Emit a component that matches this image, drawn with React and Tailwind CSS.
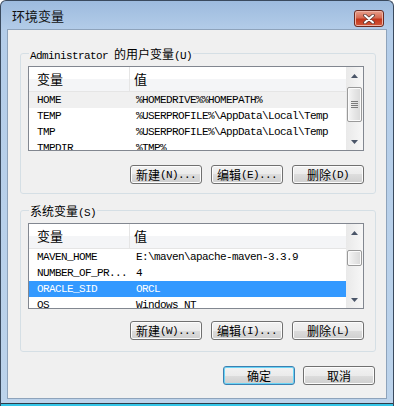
import React from 'react';

const mono = "font-['Liberation_Mono',monospace] text-[11px] tracking-[-0.6px]";
const cjk = "font-['Noto_Sans_CJK_SC',sans-serif] text-[12px]";

const userVars = [
  ['HOME', '%HOMEDRIVE%%HOMEPATH%'],
  ['TEMP', '%USERPROFILE%\\AppData\\Local\\Temp'],
  ['TMP', '%USERPROFILE%\\AppData\\Local\\Temp'],
  ['TMPDIR', '%TMP%'],
];

const sysVars = [
  ['MAVEN_HOME', 'E:\\maven\\apache-maven-3.3.9'],
  ['NUMBER_OF_PR...', '4'],
  ['ORACLE_SID', 'ORCL'],
  ['OS', 'Windows_NT'],
];

const Arrow = ({ down }) => (
  <svg width="7" height="4" viewBox="0 0 7 4">
    <path d={down ? 'M0 0h7L3.5 4z' : 'M0 4h7L3.5 0z'} fill="#4a5568" />
  </svg>
);

const Scrollbar = ({ thumbTop, thumbHeight }) => (
  <div className="w-[17px] flex flex-col bg-[linear-gradient(to_right,#e9e9e9,#f7f7f7)]">
    <div className="h-[17px] flex items-center justify-center">
      <Arrow />
    </div>
    <div className="flex-1 px-[1px]">
      <div
        className="border border-[#9a9a9a] rounded-[2px] bg-[linear-gradient(to_right,#f6f6f6,#e6e6e6_50%,#d9d9d9)] shadow-[inset_0_0_0_1px_#fbfbfb] flex flex-col items-center justify-center gap-[1px]"
        style={{ marginTop: thumbTop, height: thumbHeight }}
      >
        {thumbHeight > 20 && [0, 1, 2, 3].map((i) => (
          <div key={i} className="w-[7px] h-[1px] bg-[#7c7c7c]" />
        ))}
      </div>
    </div>
    <div className="h-[17px] flex items-center justify-center">
      <Arrow down />
    </div>
  </div>
);

const VarList = ({ rows, selected, faded, height, thumbTop, thumbHeight }) => (
  <div className="w-[336px] border border-[#828790] bg-white flex overflow-hidden" style={{ height }}>
    <div className="flex-1 flex flex-col overflow-hidden">
      <div className="h-[25px] flex border-b border-[#e5e5e5] bg-[linear-gradient(to_bottom,#ffffff_50%,#f4f5f7_50%)] shrink-0">
        <div className={`w-[101px] pl-[8px] flex items-center border-r border-[#e5e5e5] ${cjk} text-[13px]`}>变量</div>
        <div className={`flex-1 pl-[4px] flex items-center ${cjk} text-[13px]`}>值</div>
      </div>
      {rows.map(([name, value], i) => (
        <div
          key={name}
          className={`h-[16px] shrink-0 flex items-center whitespace-nowrap ${mono} ${
            i === selected ? 'bg-[#3399ff] text-white' : i === faded ? 'bg-[#f0f0f0] text-black' : 'text-black'
          }`}
        >
          <div className="w-[101px] pl-[8px]">{name}</div>
          <div className="pl-[6px]">{value}</div>
        </div>
      ))}
    </div>
    <Scrollbar thumbTop={thumbTop} thumbHeight={thumbHeight} />
  </div>
);

const Btn = ({ main, hint, def }) => (
  <button
    className={`w-[72px] h-[19px] rounded-[3px] border flex items-center justify-center text-black bg-[linear-gradient(to_bottom,#f2f2f2,#ebebeb_50%,#dddddd_50%,#cfcfcf)] ${
      def ? 'border-[#3c7fb1] shadow-[inset_0_0_0_1px_#6ad4f5]' : 'border-[#707070] shadow-[inset_0_0_0_1px_#fcfcfc]'
    }`}
  >
    <span className={`${cjk} leading-[14px]`}>{main}</span>
    {hint && <span className={`${mono} leading-[14px]`}>{hint}</span>}
  </button>
);

const Group = ({ legend, children, className }) => (
  <fieldset className={`ml-[12px] w-[356px] border border-[#d5dfe5] rounded-[3px] pl-[7px] ${className}`}>
    <legend className="ml-[1px] px-[1px] h-[14px] leading-[14px] whitespace-nowrap">{legend}</legend>
    {children}
  </fieldset>
);

export default function App() {
  return (
    <div className="w-[394px] h-[406px] flex flex-col rounded-t-[6px] border-t border-x border-[#3a4a5e] bg-[linear-gradient(to_bottom,#9dbbde,#b4cde9_30px,#bcd3eb)] overflow-hidden">
      {/* title bar */}
      <div className="h-[28px] flex items-start justify-between pl-[11px] pr-[9px] shrink-0">
        <span className={`${cjk} text-[13px] text-[#111] mt-[6px] leading-[18px]`}>环境变量</span>
        <div className="mt-[9px] w-[30px] h-[17px] rounded-[3px] border border-[#6b2a20] bg-[linear-gradient(to_bottom,#e8a08c,#d66a52_45%,#c3361b_55%,#d2583a)] shadow-[inset_0_0_0_1px_#eeb3a5] flex items-center justify-center">
          <svg width="12" height="10" viewBox="0 0 12 10">
            <path d="M2 1.5L10 8.5M10 1.5L2 8.5" stroke="#5a3a36" strokeWidth="3.6" strokeLinecap="round" />
            <path d="M2 1.5L10 8.5M10 1.5L2 8.5" stroke="#ffffff" strokeWidth="2" strokeLinecap="round" />
          </svg>
        </div>
      </div>

      {/* client area */}
      <div className="mx-[6px] h-[370px] border border-[#8ea3bb] bg-[#f0f0f0] flex flex-col shrink-0">
        <Group
          className="mt-[16px] pb-[9px]"
          legend={
            <>
              <span className={mono}>Administrator&nbsp;</span>
              <span className={cjk}>的用户变量</span>
              <span className={mono}>(U)</span>
            </>
          }
        >
          <div className="pt-[6px]">
            <VarList rows={userVars} faded={0} height={85} thumbTop={3} thumbHeight={35} />
          </div>
          <div className="w-[336px] mt-[14px] flex justify-end gap-[9px]">
            <Btn main="新建" hint="(N)..." />
            <Btn main="编辑" hint="(E)..." />
            <Btn main="删除" hint="(D)" />
          </div>
        </Group>

        <Group
          className="mt-[9px] pb-[11px]"
          legend={
            <>
              <span className={cjk}>系统变量</span>
              <span className={mono}>(S)</span>
            </>
          }
        >
          <div className="pt-[6px]">
            <VarList rows={sysVars} selected={2} height={86} thumbTop={9} thumbHeight={16} />
          </div>
          <div className="w-[336px] mt-[12px] flex justify-end gap-[9px]">
            <Btn main="新建" hint="(W)..." />
            <Btn main="编辑" hint="(I)..." />
            <Btn main="删除" hint="(L)" />
          </div>
        </Group>

        <div className="mt-[14px] mr-[11px] flex justify-end gap-[8px]">
          <Btn main="确定" def />
          <Btn main="取消" />
        </div>
      </div>

      <div className="h-[4px] shrink-0" />
      <div className="h-[1px] bg-[#2e3b4a] shrink-0" />
      <div className="h-[2px] bg-[#35c6e8] shrink-0" />
    </div>
  );
}
